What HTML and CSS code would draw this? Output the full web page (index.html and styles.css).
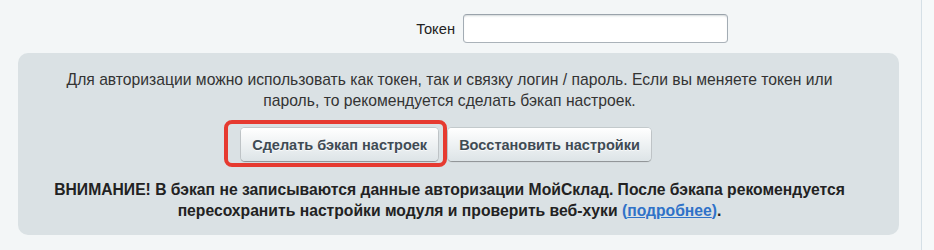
FILE: index.html
```
<!DOCTYPE html>
<html lang="ru">
<head>
<meta charset="utf-8">
<link rel="stylesheet" href="styles.css">
</head>
<body>
<div class="page">
  <div class="row">
    <label class="row-label" for="token">Токен</label>
    <div class="row-field"><input id="token" class="input" type="text"></div>
  </div>
  <div class="panel">
    <p class="info">Для авторизации можно использовать как токен, так и связку логин / пароль. Если вы меняете токен или<br>пароль, то рекомендуется сделать бэкап настроек.</p>
    <div class="buttons">
      <div class="btn-wrap">
        <button class="btn" type="button">Сделать бэкап настроек</button>
        <span class="highlight"></span>
      </div>
      <button class="btn" type="button">Восстановить настройки</button>
    </div>
    <p class="warning">ВНИМАНИЕ! В бэкап не записываются данные авторизации МойСклад. После бэкапа рекомендуется<br>пересохранить настройки модуля и проверить веб-хуки <a class="link-wrap" href="#">(<span class="link">подробнее</span>)</a>.</p>
  </div>
</div>
</body>
</html>
```
FILE: styles.css
```
html, body {
  margin: 0;
  padding: 0;
}
body {
  background: #f6f9f9;
  font-family: "Liberation Sans", Arial, sans-serif;
  font-size: 15.7px;
  color: #333;
  height: 250px;
  overflow: hidden;
}
.page {
  width: 922px;
  height: 250px;
  background: #f3f6f7;
  border-right: 1px solid #d5e0e6;
  box-sizing: border-box;
  padding-top: 14px;
}
.row {
  display: grid;
  grid-template-columns: 461px 1fr;
  align-items: center;
}
.row-label {
  text-align: right;
  padding-right: 6px;
  color: #222;
  font-size: 14.7px;
}
.row-field {
  padding-left: 2px;
}
.input {
  display: block;
  box-sizing: border-box;
  width: 265px;
  height: 29px;
  margin: 0;
  padding: 0 6px;
  background: #fff;
  border: 1px solid;
  border-color: #9aa3ab #a3acb4 #aab2b9;
  border-radius: 4px;
  box-shadow: inset 0 2px 2px -1px rgba(180, 188, 191, 0.6);
  font: 14px "Liberation Sans", Arial, sans-serif;
  outline: none;
}
.panel {
  margin: 10px 22px 0 18px;
  background: #dae1e4;
  border-radius: 10px;
  padding: 16px 38px 14px 20px;
  height: 182px;
  box-sizing: border-box;
}
.info {
  margin: 0;
  text-align: center;
  line-height: 21px;
  color: #333;
}
.buttons {
  margin-top: 17px;
  display: flex;
  justify-content: center;
  gap: 10px;
  padding-right: 7px;
}
.btn-wrap {
  position: relative;
  display: flex;
}
.btn {
  height: 33px;
  margin: 0;
  padding: 0 11px;
  border: none;
  border-radius: 4px;
  background: linear-gradient(to bottom, #ffffff, #dde4e7);
  box-shadow: 0 0 0 1px rgba(0, 0, 0, 0.1), 0 1px 1px rgba(0, 0, 0, 0.28), inset 0 1px #fff;
  color: #3f4b54;
  font: bold 14.5px "Liberation Sans", Arial, sans-serif;
  text-shadow: 0 1px rgba(255, 255, 255, 0.7);
  cursor: pointer;
}
.highlight {
  position: absolute;
  top: -8px;
  left: -17px;
  width: 223px;
  height: 47px;
  box-sizing: border-box;
  border: 4px solid #e63a30;
  border-radius: 8px;
  pointer-events: none;
}
.warning {
  margin: 18px 0 0;
  text-align: center;
  line-height: 21px;
  font-weight: bold;
  color: #222;
}
.link-wrap {
  color: #2f72c8;
  text-decoration: none;
}
.link {
  text-decoration: underline;
}
```
